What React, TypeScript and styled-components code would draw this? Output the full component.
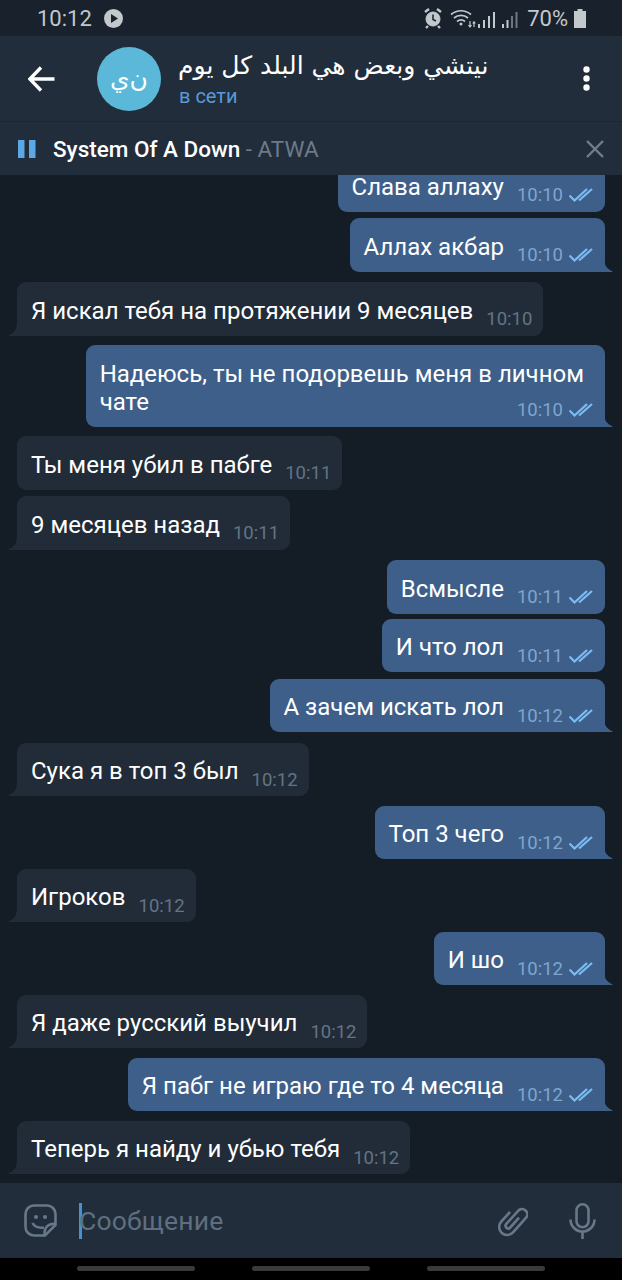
import React from 'react';
import styled, { createGlobalStyle } from 'styled-components';

const GlobalStyle = createGlobalStyle`
  html, body {
    margin: 0;
    padding: 0;
    background: #141c26;
  }
  * {
    box-sizing: border-box;
  }
`;

const Screen = styled.div`
  width: 622px;
  height: 1280px;
  display: flex;
  flex-direction: column;
  overflow: hidden;
  font-family: Roboto, "Noto Sans", sans-serif;
  color: #ffffff;
`;

const StatusBar = styled.div`
  height: 36px;
  flex: none;
  background: #18212c;
  display: flex;
  align-items: center;
  padding: 0 36px 0 37px;
  color: #c3c8cd;
`;

const Clock = styled.span`
  font-size: 22px;
  margin-right: 12px;
`;

const StatusRight = styled.div`
  margin-left: auto;
  display: flex;
  align-items: center;
`;

const StatusPercent = styled.span`
  font-size: 22px;
  margin: 0 6px 0 9px;
`;

const Header = styled.header`
  height: 86px;
  flex: none;
  background: #212d3b;
  border-bottom: 1px solid #1b2632;
  display: flex;
  align-items: center;
  padding: 0 32px 0 28px;
`;

const Avatar = styled.div`
  width: 64px;
  height: 64px;
  margin-left: 42px;
  border-radius: 50%;
  background: #5cb8d8;
  color: #ffffff;
  font-family: "DejaVu Sans", sans-serif;
  font-size: 25px;
  display: flex;
  align-items: center;
  justify-content: center;
`;

const TitleBlock = styled.div`
  margin-left: 18px;
  display: flex;
  flex-direction: column;
`;

const Title = styled.div`
  font-family: "DejaVu Sans", sans-serif;
  font-size: 25px;
  line-height: 36px;
  direction: rtl;
  margin: -2px 1px 0 -1px;
`;

const Presence = styled.div`
  font-size: 20px;
  line-height: 24px;
  color: #5a9ad6;
`;

const MenuButton = styled.div`
  margin-left: auto;
  display: flex;
`;

const PlayerBar = styled.div`
  height: 53px;
  flex: none;
  background: #212d3b;
  box-shadow: 0 1px 0 #131b24;
  display: flex;
  align-items: center;
  padding: 0 18px;
`;

const Track = styled.div`
  margin-left: 17px;
  font-size: 22.5px;
  font-weight: 500;
  color: #ffffff;
`;

const Artist = styled.span`
  font-weight: 400;
  color: #6c7a89;
`;

const CloseButton = styled.div`
  margin-left: auto;
  display: flex;
`;

const Chat = styled.main`
  flex: 1;
  min-height: 0;
  background: #141c26;
  display: flex;
  flex-direction: column;
  justify-content: flex-end;
  padding: 0 17px 9px;
  overflow: hidden;
`;

const Bubble = styled.div<{ $out?: boolean; $stacked?: boolean; $tail?: boolean; $gap: number }>`
  position: relative;
  flex: none;
  align-self: ${(p) => (p.$out ? 'flex-end' : 'flex-start')};
  margin-top: ${(p) => p.$gap}px;
  min-height: 53.5px;
  padding: 14.5px ${(p) => (p.$stacked ? 21 : 11)}px ${(p) => (p.$stacked ? 5.5 : 0)}px 14px;
  border-radius: 9px;
  ${(p) => p.$tail && (p.$out ? 'border-bottom-right-radius: 0;' : 'border-bottom-left-radius: 0;')}
  background: ${(p) => (p.$out ? '#3d5f8a' : '#212c38')};
  display: flex;
  flex-direction: ${(p) => (p.$stacked ? 'column' : 'row')};
  align-items: flex-start;
`;

const BubbleText = styled.div`
  font-size: 24px;
  line-height: 28px;
  color: #ffffff;
  white-space: pre-line;
`;

const Meta = styled.div<{ $stacked?: boolean }>`
  display: flex;
  align-items: center;
  height: 24px;
  margin-left: 13px;
  margin-top: ${(p) => (p.$stacked ? '-18px' : '10.5px')};
  ${(p) => p.$stacked && 'align-self: flex-end; margin-right: -10px;'}
`;

const Time = styled.span<{ $out?: boolean }>`
  font-size: 18.5px;
  color: ${(p) => (p.$out ? '#7fa6cf' : '#647484')};
`;

const Checks = styled.svg`
  margin: 0 1px 0 6px;
`;

const Tail = styled.svg<{ $out?: boolean }>`
  position: absolute;
  bottom: 0;
  ${(p) => (p.$out ? 'right: -8px;' : 'left: -9px;')}
`;

const Composer = styled.footer`
  height: 75px;
  flex: none;
  background: #212d3b;
  display: flex;
  align-items: center;
  padding: 0 26px 0 24px;
`;

const Caret = styled.div`
  width: 3px;
  height: 36px;
  margin-left: 22px;
  margin-right: -3px;
  background: #4a90d0;
`;

const Placeholder = styled.div`
  font-size: 26.5px;
  color: #5f6f7f;
  letter-spacing: 0.2px;
`;

const ComposerActions = styled.div`
  margin-left: auto;
  display: flex;
  align-items: center;
  gap: 41px;
`;

const NavBar = styled.nav`
  height: 22px;
  flex: none;
  background: #000000;
  display: flex;
  justify-content: center;
  gap: 57px;
  padding-top: 8px;
`;

const NavPill = styled.div`
  width: 118px;
  height: 5px;
  border-radius: 3px;
  background: #3a3a3a;
`;

type Message = {
  text: string;
  time: string;
  out?: boolean;
  tail?: boolean;
  stacked?: boolean;
  gap: number;
};

const messages: Message[] = [
  { text: 'Слава аллаху', time: '10:10', out: true, gap: 0 },
  { text: 'Аллах акбар', time: '10:10', out: true, tail: true, gap: 6.5 },
  { text: 'Я искал тебя на протяжении 9 месяцев', time: '10:10', tail: true, gap: 10.5 },
  { text: 'Надеюсь, ты не подорвешь меня в личном\nчате', time: '10:10', out: true, tail: true, stacked: true, gap: 9.5 },
  { text: 'Ты меня убил в пабге', time: '10:11', gap: 9 },
  { text: '9 месяцев назад', time: '10:11', tail: true, gap: 6.5 },
  { text: 'Всмысле', time: '10:11', out: true, gap: 10.5 },
  { text: 'И что лол', time: '10:11', out: true, gap: 5 },
  { text: 'А зачем искать лол', time: '10:12', out: true, tail: true, gap: 6.5 },
  { text: 'Сука я в топ 3 был', time: '10:12', tail: true, gap: 10.5 },
  { text: 'Топ 3 чего', time: '10:12', out: true, tail: true, gap: 9.5 },
  { text: 'Игроков', time: '10:12', tail: true, gap: 9.5 },
  { text: 'И шо', time: '10:12', out: true, tail: true, gap: 9.5 },
  { text: 'Я даже русский выучил', time: '10:12', tail: true, gap: 9.5 },
  { text: 'Я пабг не играю где то 4 месяца', time: '10:12', out: true, tail: true, gap: 9.5 },
  { text: 'Теперь я найду и убью тебя', time: '10:12', tail: true, gap: 9.5 },
];

function PlayCircle() {
  return (
    <svg width="19" height="19" viewBox="0 0 19 19">
      <circle cx="9.5" cy="9.5" r="9.5" fill="#c3c8cd" />
      <path d="M7 5l7 4.500-7 4.500z" fill="#18212c" />
    </svg>
  );
}

function StatusIcons() {
  return (
    <svg width="94" height="24" viewBox="0 0 94 24">
      <g fill="#c3c8cd" stroke="#c3c8cd">
        <circle cx="9" cy="13" r="7" fill="#c3c8cd" strokeWidth="1" />
        <path d="M1 6l4-3M17 6l-4-3M4 20l-2 2M14 20l2 2" strokeWidth="2.400" fill="none" />
      </g>
      <path d="M9 8.500v5l3 1.500" stroke="#18212c" strokeWidth="1.500" fill="none" />
      <g fill="none" stroke="#c3c8cd" strokeWidth="1.700">
        <path d="M27 8.500c6-5 14-5 20 0" />
        <path d="M30 12c4-3.500 10-3.500 14 0" />
        <path d="M33 15.500c2.500-2 5.500-2 8 0" />
      </g>
      <circle cx="37" cy="18" r="1.500" fill="#c3c8cd" />
      <path d="M46 15v6M44.500 19l1.500 2 1.500-2M50 21v-5M48.800 17.500l1.200-1.700 1.200 1.700" stroke="#c3c8cd" strokeWidth="1.200" fill="none" />
      <g fill="#c3c8cd">
        <rect x="54" y="18" width="2" height="4" />
        <rect x="59" y="14" width="2" height="8" />
        <rect x="64" y="10" width="2" height="12" />
        <rect x="69" y="6" width="2" height="16" />
        <rect x="78" y="18" width="2" height="4" />
        <rect x="82.500" y="14" width="2" height="8" />
      </g>
      <g fill="#6f7882">
        <rect x="87" y="10" width="2" height="12" />
        <rect x="91.500" y="6" width="2" height="16" />
      </g>
    </svg>
  );
}

function BatteryIcon() {
  return (
    <svg width="12" height="19" viewBox="0 0 12 19">
      <path d="M3.500 0h5v2h3.500v17H0V2h3.500z" fill="#c3c8cd" />
    </svg>
  );
}

function BackArrow() {
  return (
    <svg width="27" height="26" viewBox="0 0 27 26">
      <path d="M1.500 13h25M13 1.500L1.800 13 13 24.500" fill="none" stroke="#ffffff" strokeWidth="3.400" />
    </svg>
  );
}

function MenuDots() {
  return (
    <svg width="7" height="25" viewBox="0 0 7 25" fill="#ffffff">
      <circle cx="3.500" cy="3.500" r="3.200" />
      <circle cx="3.500" cy="12.500" r="3.200" />
      <circle cx="3.500" cy="21.500" r="3.200" />
    </svg>
  );
}

function PauseIcon() {
  return (
    <svg width="18" height="18" viewBox="0 0 18 18" fill="#5ca8e6">
      <rect x="0" y="0" width="6.500" height="18" />
      <rect x="11" y="0" width="6.500" height="18" />
    </svg>
  );
}

function CloseIcon() {
  return (
    <svg width="18" height="18" viewBox="0 0 18 18">
      <path d="M1 1l16 16M17 1L1 17" stroke="#707e8c" strokeWidth="2.400" fill="none" />
    </svg>
  );
}

function DoubleCheck() {
  return (
    <Checks width="24" height="14" viewBox="0 0 24 14" fill="none" stroke="#7cbcf2" strokeWidth="2.200">
      <path d="M0.500 7.500l5 5L18 1" />
      <path d="M10 12.500L23 1" />
    </Checks>
  );
}

function BubbleTail({ out }: { out?: boolean }) {
  return (
    <Tail $out={out} width="9" height="14" viewBox="0 0 9 14">
      {out ? (
        <path d="M0 0c0 7 3 11 8 13 1 .4.500 1-.5 1H0z" fill="#3d5f8a" />
      ) : (
        <path d="M9 0c0 7-3 11-8 13-1 .4-.5 1 .5 1H9z" fill="#212c38" />
      )}
    </Tail>
  );
}

function StickerIcon() {
  return (
    <svg width="33" height="33" viewBox="0 0 33 33" fill="none" stroke="#687888" strokeWidth="2.600">
      <path d="M10 1.500h13a8.500 8.500 0 0 1 8.500 8.500v11L21 31.500H10A8.500 8.500 0 0 1 1.500 23V10A8.500 8.500 0 0 1 10 1.500z" />
      <path d="M31.500 20c-7-1-11.500 3-11 11.500" />
      <path d="M8.500 19c2 3.800 6 5.200 11.500 4.500" />
      <circle cx="12" cy="13" r="2" fill="#687888" stroke="none" />
      <circle cx="21" cy="13" r="2" fill="#687888" stroke="none" />
    </svg>
  );
}

function ClipIcon() {
  return (
    <svg width="30" height="33" viewBox="0 0 30 33" fill="none" stroke="#687888" strokeWidth="3">
      <g transform="translate(15 16.500) rotate(42) scale(0.88)">
        <path d="M3 -7V8a3 3 0 0 1-6 0V-12a6 6 0 0 1 12 0V10a9 9 0 0 1-18 0V-5" />
      </g>
    </svg>
  );
}

function MicIcon() {
  return (
    <svg width="27" height="36" viewBox="0 0 27 36" fill="none" stroke="#687888" strokeWidth="2.600">
      <rect x="7.500" y="1.300" width="12" height="23" rx="6" />
      <path d="M1.500 16.500a12 12 0 0 0 24 0M13.500 28.500V36" />
    </svg>
  );
}

function App() {
  return (
    <Screen>
      <GlobalStyle />
      <StatusBar>
        <Clock>10:12</Clock>
        <PlayCircle />
        <StatusRight>
          <StatusIcons />
          <StatusPercent>70%</StatusPercent>
          <BatteryIcon />
        </StatusRight>
      </StatusBar>
      <Header>
        <BackArrow />
        <Avatar>ن‌ي</Avatar>
        <TitleBlock>
          <Title>نيتشي وبعض هي البلد كل يوم</Title>
          <Presence>в сети</Presence>
        </TitleBlock>
        <MenuButton>
          <MenuDots />
        </MenuButton>
      </Header>
      <PlayerBar>
        <PauseIcon />
        <Track>
          System Of A Down <Artist>- ATWA</Artist>
        </Track>
        <CloseButton>
          <CloseIcon />
        </CloseButton>
      </PlayerBar>
      <Chat>
        {messages.map((message) => (
          <Bubble
            key={message.text}
            $out={message.out}
            $stacked={message.stacked}
            $tail={message.tail}
            $gap={message.gap}
          >
            <BubbleText>{message.text}</BubbleText>
            <Meta $stacked={message.stacked}>
              <Time $out={message.out}>{message.time}</Time>
              {message.out && <DoubleCheck />}
            </Meta>
            {message.tail && <BubbleTail out={message.out} />}
          </Bubble>
        ))}
      </Chat>
      <Composer>
        <StickerIcon />
        <Caret />
        <Placeholder>Сообщение</Placeholder>
        <ComposerActions>
          <ClipIcon />
          <MicIcon />
        </ComposerActions>
      </Composer>
      <NavBar>
        <NavPill />
        <NavPill />
        <NavPill />
      </NavBar>
    </Screen>
  );
}

export default App;
